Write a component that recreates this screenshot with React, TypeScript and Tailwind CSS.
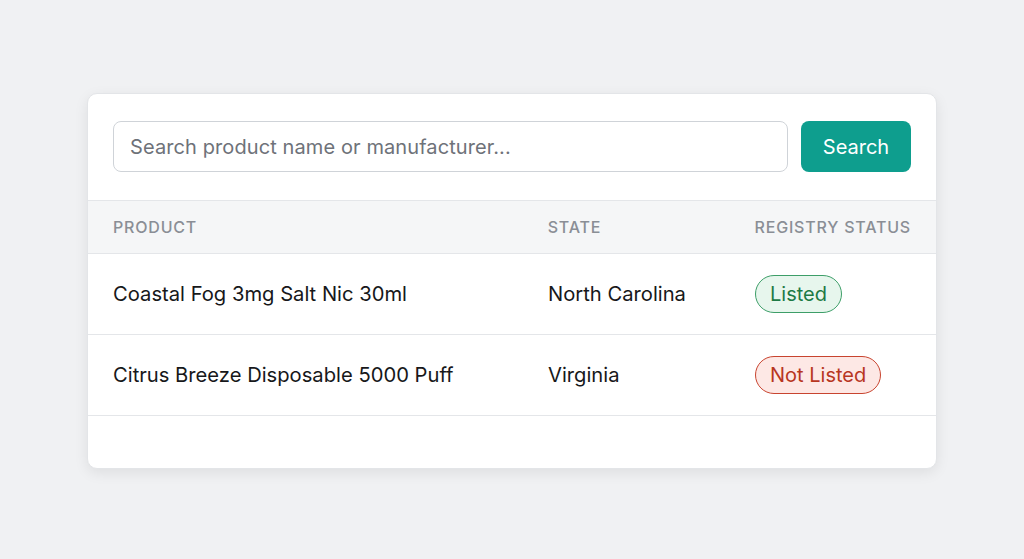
const rows = [
  { product: "Coastal Fog 3mg Salt Nic 30ml", state: "North Carolina", listed: true },
  { product: "Citrus Breeze Disposable 5000 Puff", state: "Virginia", listed: false },
];

const StatusBadge = ({ listed }: { listed: boolean }) =>
  listed ? (
    <span className="inline-flex h-[38px] items-center rounded-full border border-[#3d9e68] bg-[#e7f6ed] px-[14px] text-[20px] text-[#1d7a45]">
      Listed
    </span>
  ) : (
    <span className="inline-flex h-[38px] items-center rounded-full border border-[#c8442f] bg-[#fde8e5] px-[14px] text-[20px] text-[#b8361f]">
      Not Listed
    </span>
  );

export default function App() {
  return (
    <div
      className="flex h-[559px] w-full items-start justify-center bg-[#f0f1f3] pt-[93px]"
      style={{ fontFamily: "Inter, 'Noto Sans', sans-serif" }}
    >
      <div className="w-[850px] overflow-hidden rounded-[10px] border border-[#e3e5e8] bg-white shadow-[0_4px_14px_rgba(0,0,0,0.08)]">
        <div className="flex items-center gap-[13px] px-[25px] pb-[28px] pt-[27px]">
          <input
            className="h-[51px] flex-1 rounded-[8px] border border-[#cfd3d8] bg-white px-[16px] text-[20px] tracking-[0.005em] text-[#333] outline-none placeholder:text-[#6e7279]"
            placeholder="Search product name or manufacturer..."
          />
          <button className="h-[51px] w-[110px] rounded-[8px] bg-[#0e9e8e] text-[20px] text-white">
            Search
          </button>
        </div>
        <div className="flex h-[54px] items-center whitespace-nowrap border-y border-[#e4e6e9] bg-[#f5f6f7] px-[25px] text-[16px] font-medium tracking-[0.05em] text-[#8a8e95]">
          <div className="w-[435px]">PRODUCT</div>
          <div className="w-[207px]">STATE</div>
          <div className="flex-1">REGISTRY STATUS</div>
        </div>
        {rows.map((r) => (
          <div
            key={r.product}
            className="flex h-[81px] items-center border-b border-[#e4e6e9] px-[25px] text-[20.2px] text-[#17181a]"
          >
            <div className="w-[435px]">{r.product}</div>
            <div className="w-[207px]">{r.state}</div>
            <div className="flex-1">
              <StatusBadge listed={r.listed} />
            </div>
          </div>
        ))}
        <div className="h-[52px]" />
      </div>
    </div>
  );
}
